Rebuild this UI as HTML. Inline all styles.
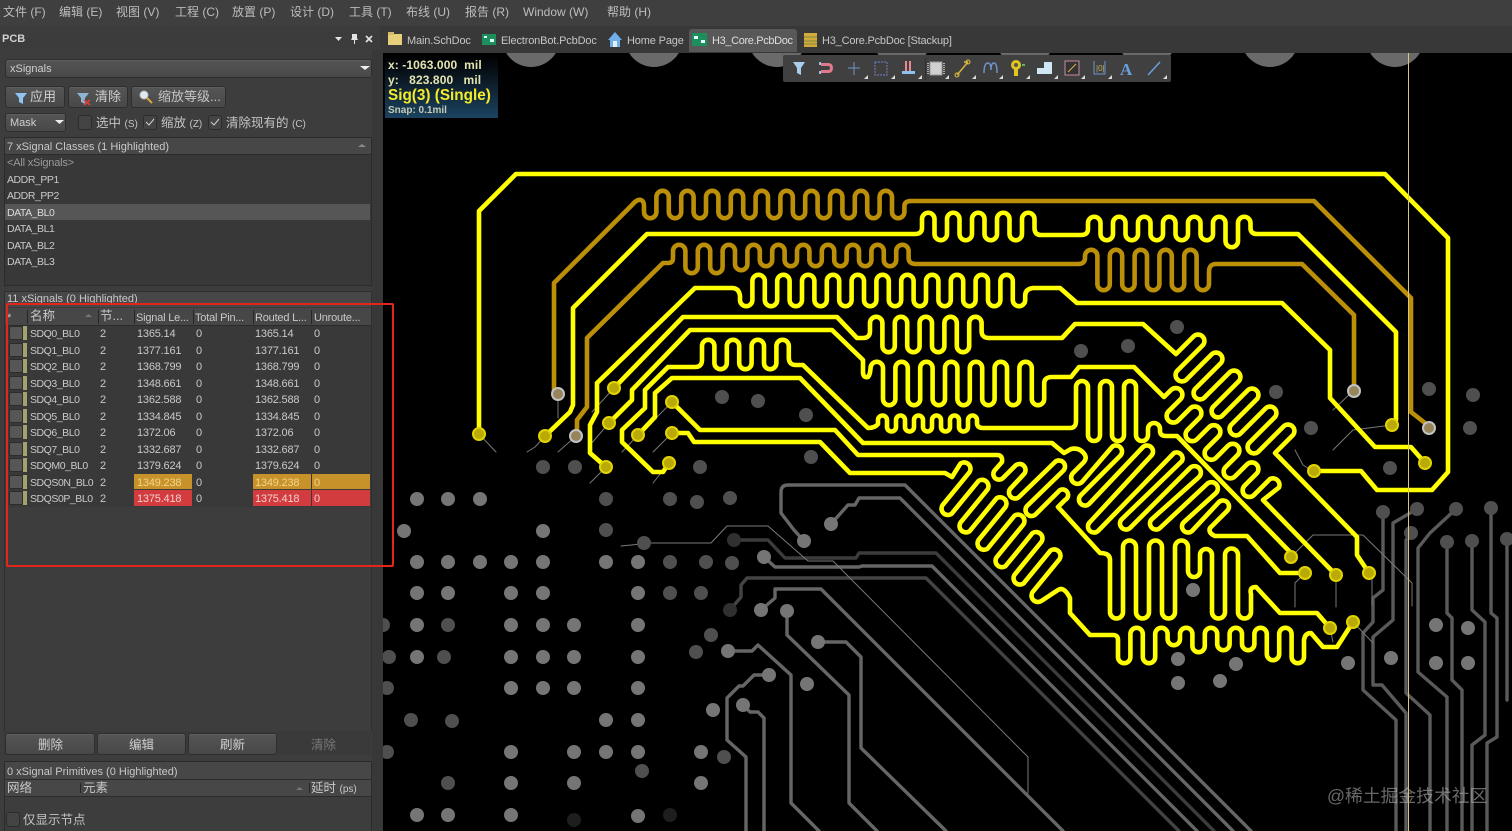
<!DOCTYPE html>
<html><head><meta charset="utf-8"><style>
html,body{margin:0;padding:0;background:#000;}
#r{position:relative;width:1512px;height:831px;overflow:hidden;background:#000;font:11px "Liberation Sans","Noto Sans CJK SC",sans-serif;color:#c9c9c9;filter:blur(.35px);}
.a{position:absolute;}
.t{position:absolute;white-space:nowrap;line-height:14px;height:14px;}
.m{font-size:12px;color:#bdbdbd;top:5px;}
.u{font-size:10.5px;letter-spacing:-.45px;}
.v{letter-spacing:-.2px;}
.tb{letter-spacing:-.15px;color:#c6c6c6;top:34px;}
.b{position:absolute;box-sizing:border-box;background:linear-gradient(#555,#484848);border:1px solid #2e2e2e;border-radius:3px;box-shadow:inset 0 1px 0 #5e5e5e;}
.c{position:absolute;box-sizing:border-box;width:14px;height:15px;background:#444;border:1px solid #2c2c2c;border-radius:3px;}
.s{position:absolute;left:9px;width:14px;height:14px;background:#565656;border:1px solid #2c2c2c;border-radius:2px;box-sizing:border-box;}
.o{position:absolute;left:23px;width:4px;height:14px;background:#a3a36e;}
svg{position:absolute;left:0;top:0;}
.sep{position:absolute;width:1px;background:#262626;}
</style></head><body><div id="r">

<svg width="1512" height="831" viewBox="0 0 1512 831" fill="none" stroke-linejoin="round" stroke-linecap="round">
<!-- top bumps -->
<g fill="#6a6a6a"><circle cx="531" cy="38" r="29"/><circle cx="654" cy="38" r="29"/><circle cx="777" cy="38" r="29"/><circle cx="902" cy="38" r="29"/><circle cx="1025" cy="38" r="29"/><circle cx="1147" cy="38" r="29"/><circle cx="1270" cy="38" r="29"/><circle cx="1395" cy="38" r="29"/></g>

<!-- gray traces -->
<g stroke="#666" stroke-width="3.4">
<path d="M804,541L794,530L781,513V492Q781,485 788,485H905L1251,831"/>
<path d="M831,524L848,505H855L859,498H900L1233,831"/>
<path d="M764,557L775,567H859L862,566H932L1197,831"/>
<path d="M761,610L775,598V589H821L1063,831"/>
<path d="M787,611V635L849,695V803L877,831"/>
<path d="M818,642H846L861,657V748L946,831"/>
<path d="M728,651H752L758,645L791,675V803L819,831"/>
<path d="M769,675H754L743,686H739L727,698V740L746,757V831"/>
<path d="M743,705L750,712H758L764,718V831"/>
</g>
<g stroke="#5a5a5a" stroke-width="3.4">
<path d="M1383,512V590L1373,598V622L1363,633V690L1396,720V831"/>
<path d="M1417,509L1393,523V620L1373,637V685H1382L1406,713V831"/>
<path d="M1411,533L1406,540V693L1430,715V831"/>
<path d="M1456,509L1430,533L1418,548V672L1447,697V831"/>
<path d="M1447,542V613L1452,618V680L1462,690V831"/>
<path d="M1472,541V610L1485,622V735L1472,745V831"/>
<path d="M1491,508V613L1497,618V737L1487,743V831"/>
<path d="M1507,539V700"/>
</g>
<path d="M734,540H768L785,558H856L859,553H936L1214,831" stroke="#3c3c3c" stroke-width="3.4"/>
<path d="M730,610L741,597V585L747,578H926L1179,831" stroke="#444" stroke-width="3.4"/>
<path d="M621,546L651,543H711L727,526H768L808,561H833L1028,757V793" stroke="#7a7a7a" stroke-width="1"/>

<!-- vias -->
<g fill="#757575">
<circle cx="417" cy="499" r="7"/><circle cx="448" cy="499" r="7"/><circle cx="480" cy="499" r="7"/>
<circle cx="404" cy="531" r="7"/><circle cx="543" cy="531" r="7"/>
<circle cx="417" cy="562" r="7"/><circle cx="448" cy="562" r="7"/><circle cx="480" cy="562" r="7"/><circle cx="511" cy="562" r="7"/><circle cx="543" cy="562" r="7"/><circle cx="606" cy="562" r="7"/><circle cx="638" cy="562" r="7"/>
<circle cx="417" cy="593" r="7"/><circle cx="448" cy="593" r="7"/><circle cx="511" cy="593" r="7"/><circle cx="543" cy="593" r="7"/><circle cx="638" cy="593" r="7"/>
<circle cx="417" cy="625" r="7"/><circle cx="511" cy="625" r="7"/><circle cx="543" cy="625" r="7"/><circle cx="574" cy="625" r="7"/><circle cx="638" cy="625" r="7"/>
<circle cx="417" cy="657" r="7"/><circle cx="511" cy="657" r="7"/><circle cx="543" cy="657" r="7"/><circle cx="574" cy="657" r="7"/><circle cx="638" cy="657" r="7"/>
<circle cx="511" cy="688" r="7"/><circle cx="543" cy="688" r="7"/><circle cx="574" cy="688" r="7"/><circle cx="638" cy="688" r="7"/>
<circle cx="606" cy="720" r="7"/><circle cx="638" cy="720" r="7"/>
<circle cx="511" cy="752" r="7"/><circle cx="574" cy="752" r="7"/><circle cx="606" cy="752" r="7"/><circle cx="638" cy="752" r="7"/><circle cx="701" cy="752" r="7"/>
<circle cx="511" cy="783" r="7"/><circle cx="574" cy="783" r="7"/><circle cx="701" cy="783" r="7"/>
<circle cx="417" cy="815" r="7"/><circle cx="448" cy="815" r="7"/><circle cx="511" cy="815" r="7"/><circle cx="638" cy="816" r="7"/>
<circle cx="804" cy="541" r="7"/><circle cx="831" cy="524" r="7"/><circle cx="764" cy="557" r="7"/><circle cx="761" cy="610" r="7"/><circle cx="787" cy="611" r="7"/><circle cx="818" cy="642" r="7"/><circle cx="728" cy="651" r="7"/><circle cx="769" cy="675" r="7"/><circle cx="743" cy="705" r="7"/><circle cx="807" cy="684" r="7"/><circle cx="713" cy="710" r="7"/>
<circle cx="1193" cy="590" r="7"/><circle cx="1178" cy="659" r="7"/><circle cx="1236" cy="664" r="7"/><circle cx="1178" cy="683" r="7"/><circle cx="1220" cy="681" r="7"/><circle cx="1348" cy="663" r="7"/><circle cx="1391" cy="658" r="7"/><circle cx="1436" cy="625" r="7"/><circle cx="1468" cy="628" r="7"/><circle cx="1436" cy="663" r="7"/><circle cx="1468" cy="663" r="7"/>
</g>
<g fill="#4f4f4f">
<circle cx="606" cy="499" r="7"/><circle cx="670" cy="499" r="7"/><circle cx="697" cy="502" r="7"/><circle cx="730" cy="498" r="7"/><circle cx="606" cy="530" r="7"/><circle cx="670" cy="562" r="7"/><circle cx="706" cy="562" r="7"/><circle cx="732" cy="563" r="7"/><circle cx="670" cy="593" r="7"/><circle cx="701" cy="593" r="7"/><circle cx="383" cy="625" r="7"/><circle cx="448" cy="625" r="7"/><circle cx="389" cy="657" r="7"/><circle cx="444" cy="657" r="7"/><circle cx="387" cy="688" r="7"/><circle cx="411" cy="720" r="7"/><circle cx="452" cy="721" r="7"/><circle cx="387" cy="752" r="7"/><circle cx="724" cy="757" r="7"/><circle cx="642" cy="771" r="7"/><circle cx="448" cy="783" r="7"/><circle cx="644" cy="543" r="7"/><circle cx="711" cy="635" r="7"/><circle cx="696" cy="652" r="7"/>
<circle cx="722" cy="397" r="7"/><circle cx="758" cy="401" r="7"/><circle cx="806" cy="415" r="7"/><circle cx="811" cy="457" r="7"/><circle cx="543" cy="467" r="7"/><circle cx="575" cy="467" r="7"/><circle cx="700" cy="467" r="7"/><circle cx="1177" cy="327" r="7"/><circle cx="1081" cy="351" r="7"/><circle cx="1128" cy="346" r="7"/><circle cx="1276" cy="392" r="7"/><circle cx="1311" cy="428" r="7"/><circle cx="1390" cy="468" r="7"/><circle cx="1429" cy="389" r="7"/><circle cx="1473" cy="395" r="7"/><circle cx="1470" cy="428" r="7"/>
<circle cx="1383" cy="512" r="7"/><circle cx="1417" cy="509" r="7"/><circle cx="1411" cy="533" r="7"/><circle cx="1456" cy="509" r="7"/><circle cx="1447" cy="542" r="7"/><circle cx="1472" cy="541" r="7"/><circle cx="1491" cy="508" r="7"/><circle cx="1507" cy="539" r="7"/>
</g>
<g fill="#303030"><circle cx="734" cy="540" r="7"/><circle cx="730" cy="610" r="7"/><circle cx="574" cy="820" r="7" fill="#1e1e1e"/><circle cx="670" cy="815" r="7" fill="#1e1e1e"/></g>

<!-- thin nets near pads -->
<g stroke="#777" stroke-width="1">
<path d="M479,434L496,452M545,436L535,447L527,452M576,436L558,452M606,467L590,483M614,388L592,412M609,423L590,445M638,435L622,452M669,463L653,483M672,402L654,420M672,433L653,452M558,394V418"/>
<path d="M1314,472L1303,465L1295,450M1291,557L1313,535H1363L1412,583V606M1369,573L1372,580V605M1305,573L1295,583V607M1336,575V607M1353,391L1333,410M1392,425L1353,430L1333,450M1353,622L1373,643M1330,628L1333,642"/>
</g>

<!-- gold traces -->
<g stroke="#bc8f08" stroke-width="4.6">
<path d="M554,394V283L632,205Q637,199 641,200Q644,201 644,206V212a6.2 6.2 0 0 0 12.4 0V197a6.2 6.2 0 0 1 12.4 0V212a6.2 6.2 0 0 0 12.4 0V197a6.2 6.2 0 0 1 12.4 0V212a6.2 6.2 0 0 0 12.4 0V197a6.2 6.2 0 0 1 12.4 0V212a6.2 6.2 0 0 0 12.4 0V197a6.2 6.2 0 0 1 12.4 0V212a6.2 6.2 0 0 0 12.4 0V197a6.2 6.2 0 0 1 12.4 0V212a6.2 6.2 0 0 0 12.4 0V197a6.2 6.2 0 0 1 12.4 0V212a6.2 6.2 0 0 0 12.4 0V197a6.2 6.2 0 0 1 12.4 0V212a6.2 6.2 0 0 0 12.4 0V197a6.2 6.2 0 0 1 12.4 0V212a6.2 6.2 0 0 0 12.4 0V197a6.2 6.2 0 0 1 12.4 0V212a6.2 6.2 0 0 0 12.4 0V197a6.2 6.2 0 0 1 12.4 0V212a6.2 6.2 0 0 0 12.4 0V207Q904,201 911,201H1314L1411,298V412L1425,423L1429,428"/>
<path d="M577,436V420L587,407V338L663,263H668Q673,263 673,258V251a6.2 6.2 0 0 1 12.4 0V267a6.2 6.2 0 0 0 12.4 0V251a6.2 6.2 0 0 1 12.4 0V267a6.2 6.2 0 0 0 12.4 0V251a6.2 6.2 0 0 1 12.4 0V264a6.2 6.2 0 0 0 12.4 0V251a6.2 6.2 0 0 1 12.4 0V260a6.2 6.2 0 0 0 12.4 0V251a6.2 6.2 0 0 1 12.4 0V260a6.2 6.2 0 0 0 12.4 0V251a6.2 6.2 0 0 1 12.4 0V260a6.2 6.2 0 0 0 12.4 0V251a6.2 6.2 0 0 1 12.4 0V260a6.2 6.2 0 0 0 12.4 0V251a6.2 6.2 0 0 1 12.4 0V260a6.2 6.2 0 0 0 12.4 0V251a6.2 6.2 0 0 1 12.4 0V260a6.2 6.2 0 0 0 12.4 0V251a6.2 6.2 0 0 1 12.4 0V258Q908.6,264 916,264H1078Q1085,264 1085,258V256a6.2 6.2 0 0 1 12.4 0V284a6.2 6.2 0 0 0 12.4 0V256a6.2 6.2 0 0 1 12.4 0V284a6.2 6.2 0 0 0 12.4 0V256a6.2 6.2 0 0 1 12.4 0V284a6.2 6.2 0 0 0 12.4 0V256a6.2 6.2 0 0 1 12.4 0V284a6.2 6.2 0 0 0 12.4 0V256a6.2 6.2 0 0 1 12.4 0V284a6.2 6.2 0 0 0 12.4 0V272Q1209,264 1216,264H1302L1354,315V391"/>
</g>

<!-- yellow traces -->
<g stroke="#ffff00" stroke-width="4.6">
<path d="M1314,471H1361L1377,490H1432L1448,472V238L1385,174H516L479,211V434"/>
<path d="M545,436L570,412L573,405V308L647,234H915Q922,234 922,228V219a6.25 6.25 0 0 1 12.5 0V234a6.25 6.25 0 0 0 12.5 0V219a6.25 6.25 0 0 1 12.5 0V234a6.25 6.25 0 0 0 12.5 0V219a6.25 6.25 0 0 1 12.5 0V234a6.25 6.25 0 0 0 12.5 0V219a6.25 6.25 0 0 1 12.5 0V234a6.25 6.25 0 0 0 12.5 0V219a6.25 6.25 0 0 1 12.5 0V228Q1034.5,235 1041,235H1081Q1088,235 1088,229V223a6.25 6.25 0 0 1 12.5 0V234a6.25 6.25 0 0 0 12.5 0V223a6.25 6.25 0 0 1 12.5 0V234a6.25 6.25 0 0 0 12.5 0V223a6.25 6.25 0 0 1 12.5 0V234a6.25 6.25 0 0 0 12.5 0V223a6.25 6.25 0 0 1 12.5 0V234a6.25 6.25 0 0 0 12.5 0V223a6.25 6.25 0 0 1 12.5 0V234a6.25 6.25 0 0 0 12.5 0V223a6.25 6.25 0 0 1 12.5 0V241a6.25 6.25 0 0 0 12.5 0V223a6.25 6.25 0 0 1 12.5 0V228Q1250.5,234 1257,234H1298L1396,332V420L1392,425"/>
<path d="M606,467L590,453V425L597,412V383L695,288H732Q739,288 740,296V300a6.2 6.2 0 0 0 12.4 0V281a6.2 6.2 0 0 1 12.4 0V300a6.2 6.2 0 0 0 12.4 0V281a6.2 6.2 0 0 1 12.4 0V300a6.2 6.2 0 0 0 12.4 0V281a6.2 6.2 0 0 1 12.4 0V300a6.2 6.2 0 0 0 12.4 0V281a6.2 6.2 0 0 1 12.4 0V300a6.2 6.2 0 0 0 12.4 0V281a6.2 6.2 0 0 1 12.4 0V300a6.2 6.2 0 0 0 12.4 0V281a6.2 6.2 0 0 1 12.4 0V300a6.2 6.2 0 0 0 12.4 0V281a6.2 6.2 0 0 1 12.4 0V300a6.2 6.2 0 0 0 12.4 0V281a6.2 6.2 0 0 1 12.4 0V300a6.2 6.2 0 0 0 12.4 0V281a6.2 6.2 0 0 1 12.4 0V300a6.2 6.2 0 0 0 12.4 0V281a6.2 6.2 0 0 1 12.4 0V300a6.2 6.2 0 0 0 12.4 0V281a6.2 6.2 0 0 1 12.4 0V300a6.2 6.2 0 0 0 12.4 0V296Q1025,289 1033,288H1060L1077,303H1282L1330,350V398L1375,447H1411L1425,463"/>
<path d="M614,388L683,317H837L857,338H863Q870,338 870,331V323a6.2 6.2 0 0 1 12.4 0V346a6.2 6.2 0 0 0 12.4 0V323a6.2 6.2 0 0 1 12.4 0V346a6.2 6.2 0 0 0 12.4 0V323a6.2 6.2 0 0 1 12.4 0V346a6.2 6.2 0 0 0 12.4 0V323a6.2 6.2 0 0 1 12.4 0V346a6.2 6.2 0 0 0 12.4 0V323a6.2 6.2 0 0 1 12.4 0V331Q981.6,338 989,338H1062L1075,324H1143L1176,354l18-18a6.4 6.4 0 0 1 9 9l-26 26a6.4 6.4 0 0 0 9 9l26-26a6.4 6.4 0 0 1 9 9l-26 26a6.4 6.4 0 0 0 9 9l26-26a6.4 6.4 0 0 1 9 9l-26 26a6.4 6.4 0 0 0 9 9l26-26a6.4 6.4 0 0 1 9 9l-26 26a6.4 6.4 0 0 0 9 9l26-26a6.4 6.4 0 0 1 9 9l-26 26a6.4 6.4 0 0 0 9 9l26-26a6.4 6.4 0 0 1 9 9L1275,453L1357,537V555L1369,573"/>
<path d="M609,423L632,400V390L690,330H832L863,360V372Q863,378 868,377Q870,375 870.6,368a6.2 6.2 0 0 1 12.4 0V399a6.2 6.2 0 0 0 12.4 0V368a6.2 6.2 0 0 1 12.4 0V399a6.2 6.2 0 0 0 12.4 0V368a6.2 6.2 0 0 1 12.4 0V399a6.2 6.2 0 0 0 12.4 0V368a6.2 6.2 0 0 1 12.4 0V399a6.2 6.2 0 0 0 12.4 0V368a6.2 6.2 0 0 1 12.4 0V399a6.2 6.2 0 0 0 12.4 0V368a6.2 6.2 0 0 1 12.4 0V399a6.2 6.2 0 0 0 12.4 0V368a6.2 6.2 0 0 1 12.4 0V399a6.2 6.2 0 0 0 12.4 0V384Q1044,377 1052,377H1071L1079,367H1134L1164,397l7-7a6.6 6.6 0 0 1 9.5 9.3l-12 12a6.6 6.6 0 0 0 9.5 9.3l12-12a6.6 6.6 0 0 1 9.5 9.3l-12 12a6.6 6.6 0 0 0 9.5 9.3l12-12a6.6 6.6 0 0 1 9.5 9.3l-12 12a6.6 6.6 0 0 0 9.5 9.3l12-12a6.6 6.6 0 0 1 9.5 9.3l-12 12a6.6 6.6 0 0 0 9.5 9.3l12-12a6.6 6.6 0 0 1 9.5 9.3l-12 12a6.6 6.6 0 0 0 9.5 9.3l16-16a6.6 6.6 0 0 1 9 8.4L1263,500L1336,575"/>
<path d="M669,463L663,472H653L622,442V430L645,408V390L668,367H695Q702,367 702,360V346a6.2 6.2 0 0 1 12.4 0V363a6.2 6.2 0 0 0 12.4 0V346a6.2 6.2 0 0 1 12.4 0V363a6.2 6.2 0 0 0 12.4 0V346a6.2 6.2 0 0 1 12.4 0V363a6.2 6.2 0 0 0 12.4 0V346a6.2 6.2 0 0 1 12.4 0V358Q789,365 796,365H803L868,428Q875,428 878,424V420a4.5 4.5 0 0 1 9 0V427a4.5 4.5 0 0 0 9 0V420a4.5 4.5 0 0 1 9 0V427a4.5 4.5 0 0 0 9 0V420a4.5 4.5 0 0 1 9 0V427a4.5 4.5 0 0 0 9 0V420a4.5 4.5 0 0 1 9 0V427a4.5 4.5 0 0 0 9 0V420a4.5 4.5 0 0 1 9 0V427a4.5 4.5 0 0 0 9 0V420a4.5 4.5 0 0 1 9 0V423Q977,428 983,428H1070Q1076,428 1076,421V387a6 6 0 0 1 12 0V435a6 6 0 0 0 12 0V387a6 6 0 0 1 12 0V435a6 6 0 0 0 12 0V387a6 6 0 0 1 12 0V435a6 6 0 0 0 12 0V429a6 6 0 0 1 12 0V431Q1160,436 1166,436H1177L1290,552L1291,557"/>
<path d="M638,435L655,417V393L672,378H800L863,443H1052L1064,453L1071,449Q1080,447 1085,455Q1087,459 1083,463L1073,473A6 6 0 0 0 1082,482L1112,447A6 6 0 0 1 1120,456L1081,495A6 6 0 0 0 1089,504L1143,447A6 6 0 0 1 1151,456L1090,522A6 6 0 0 0 1098,531L1174,453A6 6 0 0 1 1182,461L1122,519A6 6 0 0 0 1130,528L1190,468A6 6 0 0 1 1199,477L1152,519A6 6 0 0 0 1160,528L1207,484A6 6 0 0 1 1216,493L1184,522A6 6 0 0 0 1192,531L1219,502A6 6 0 0 1 1227,511L1210,528Q1208,533 1215,536H1247L1280,573H1305"/>
<path d="M672,433H688L694,442H820L850,473H945L952,477L960.500,463.500a6.400 6.400 0 0 1 9 8.700l-27 33a6.400 6.400 0 0 0 9 8.700l27-33a6.400 6.400 0 0 1 9 8.700l-27 33a6.400 6.400 0 0 0 9 8.700l27-33a6.400 6.400 0 0 1 9 8.700l-27 33a6.400 6.400 0 0 0 9 8.700l27-33a6.400 6.400 0 0 1 9 8.700l-27 33a6.400 6.400 0 0 0 9 8.700l27-33a6.400 6.400 0 0 1 9 8.700l-27 33a6.400 6.400 0 0 0 9 8.700l27-33a6.400 6.400 0 0 1 9 8.700l-27 33a6.400 6.400 0 0 0 9 8.700L1058,590Q1064,586 1070,598V613L1090,635H1113Q1118,635 1118,640V657a6.2 6.2 0 0 0 12.4 0V634a6.2 6.2 0 0 1 12.4 0V657a6.2 6.2 0 0 0 12.4 0V634a6.2 6.2 0 0 1 12.4 0V639a6.2 6.2 0 0 0 12.4 0V634a6.2 6.2 0 0 1 12.4 0V646a6.2 6.2 0 0 0 12.4 0V634a6.2 6.2 0 0 1 12.4 0V644a6.2 6.2 0 0 0 12.4 0V634a6.2 6.2 0 0 1 12.4 0V644a6.2 6.2 0 0 0 12.4 0V634a6.2 6.2 0 0 1 12.4 0V654a6.2 6.2 0 0 0 12.4 0V634a6.2 6.2 0 0 1 12.4 0V657a6.2 6.2 0 0 0 12.4 0V640Q1305,633 1311,633L1323,647H1337L1353,622"/>
<path d="M672,402L700,430H835L858,455H997Q1003,455 1002,462L995,470A5 5 0 0 0 1003,478L1015,466A5 5 0 0 1 1024,474L1011,488A5 5 0 0 0 1019,497L1055,462A5.5 5.5 0 0 1 1063,471L1027,506A5.5 5.5 0 0 0 1036,514L1060,490A5 5 0 0 1 1065,500L1058,507L1100,553Q1110,553 1110,560V612a6.5 6.5 0 0 0 13 0V547a6.5 6.5 0 0 1 13 0V612a6.5 6.5 0 0 0 13 0V547a6.5 6.5 0 0 1 13 0V612a6.5 6.5 0 0 0 13 0V547a6.5 6.5 0 0 1 13 0V571a6 6 0 0 0 12 0V555a6 6 0 0 1 12 0V612a6.5 6.5 0 0 0 13 0V555a6.5 6.5 0 0 1 13 0V612a6.5 6.5 0 0 0 13 0V594Q1249,587 1256,587L1280,613H1317L1330,628"/>
</g>

<!-- pads -->
<g stroke="#e2d400" stroke-width="2" fill="#b9aa08">
<circle cx="479" cy="434" r="6"/><circle cx="545" cy="436" r="6"/><circle cx="606" cy="467" r="6"/><circle cx="609" cy="423" r="6"/><circle cx="614" cy="388" r="6"/><circle cx="638" cy="435" r="6"/><circle cx="669" cy="463" r="6"/><circle cx="672" cy="402" r="6"/><circle cx="672" cy="433" r="6"/><circle cx="1392" cy="425" r="6"/><circle cx="1425" cy="463" r="6"/><circle cx="1314" cy="471" r="6"/><circle cx="1291" cy="557" r="6"/><circle cx="1305" cy="573" r="6"/><circle cx="1336" cy="575" r="6"/><circle cx="1369" cy="573" r="6"/><circle cx="1330" cy="628" r="6"/><circle cx="1353" cy="622" r="6"/>
</g>
<g stroke="#c2c2c2" stroke-width="2" fill="#96855a"><circle cx="558" cy="394" r="6"/><circle cx="576" cy="436" r="6"/><circle cx="1354" cy="391" r="6"/><circle cx="1429" cy="428" r="6"/></g>

<path d="M1408.5,53V831" stroke="#d9c878" stroke-width="1" stroke-linecap="butt"/>
</svg>

<!-- menu -->
<div class="a" style="left:0;top:0;width:1512px;height:26px;background:#3f3f3f"></div>
<div class="t m" style="left:3px">文件 (F)</div><div class="t m" style="left:59px">编辑 (E)</div><div class="t m" style="left:116px">视图 (V)</div><div class="t m" style="left:175px">工程 (C)</div><div class="t m" style="left:232px">放置 (P)</div><div class="t m" style="left:290px">设计 (D)</div><div class="t m" style="left:349px">工具 (T)</div><div class="t m" style="left:406px">布线 (U)</div><div class="t m" style="left:465px">报告 (R)</div><div class="t m" style="left:523px">Window (W)</div><div class="t m" style="left:607px">帮助 (H)</div>

<!-- tabs -->
<div class="a" style="left:383px;top:26px;width:1129px;height:27px;background:#383838"></div>
<div class="a" style="left:689px;top:29px;width:108px;height:23px;background:#585858;border-radius:3px 3px 0 0"></div>
<svg width="1512" height="60" style="height:60px">
<rect x="388" y="34" width="14" height="11" fill="#e6cf7a"/><rect x="388" y="32" width="6" height="3" fill="#d6bc66"/>
<g fill="#1d8f5c"><rect x="482" y="34" width="14" height="11"/><rect x="692" y="33" width="15" height="13"/></g>
<g fill="#dff"><rect x="484" y="36" width="3" height="2"/><rect x="490" y="39" width="4" height="3"/><rect x="694" y="36" width="4" height="3"/><rect x="701" y="40" width="4" height="3"/></g>
<path d="M615,32L608,40H610V47H620V40H622Z" fill="#6fb0ea"/><rect x="613" y="41" width="4" height="6" fill="#e8eef5"/>
<rect x="804" y="33" width="13" height="14" fill="#d2a93a"/><path d="M804,37H817M804,41H817M804,44H817" stroke="#7d8a40" stroke-width="1"/>
</svg>
<div class="t tb" style="left:407px">Main.SchDoc</div>
<div class="t tb" style="left:501px">ElectronBot.PcbDoc</div>
<div class="t tb" style="left:627px">Home Page</div>
<div class="t tb" style="left:712px;letter-spacing:-.35px;color:#dedede">H3_Core.PcbDoc</div>
<div class="t tb" style="left:822px;letter-spacing:-.2px">H3_Core.PcbDoc [Stackup]</div>

<!-- info -->
<div class="a" style="left:385px;top:55px;width:113px;height:63px;background:linear-gradient(#000 0%,#0c1a26 40%,#1b4361 100%)"></div>
<div class="t" style="left:388px;top:58px;font-size:12px;font-weight:bold;color:#e4e4b0;white-space:pre;letter-spacing:.1px">x: -1063.000  mil</div>
<div class="t" style="left:388px;top:73px;font-size:12px;font-weight:bold;color:#e4e4b0;white-space:pre;letter-spacing:.1px">y:   823.800   mil</div>
<div class="t" style="left:388px;top:89px;font-size:15.3px;font-weight:bold;color:#f5ec28">Sig(3) (Single)</div>
<div class="t" style="left:388px;top:104px;font-size:10px;font-weight:bold;color:#c4ccb4">Snap: 0.1mil</div>

<!-- toolbar -->
<div class="a" style="left:783px;top:55px;width:388px;height:27px;background:#404040;border-radius:2px"></div>
<svg width="1512" height="90" style="height:90px" fill="none">
<path d="M793,62H805L801,68V75L797,73V68Z" fill="#a9cdea"/>
<path d="M821,63H828Q833,63 833,68Q833,73 828,73H821V70H828Q830,70 830,68Q830,66 828,66H821Z" fill="#e07a8a"/><path d="M820,62V65M820,71V74" stroke="#8fc0ee" stroke-width="2"/>
<path d="M854,62V75M848,68H860" stroke="#6f93c9"/>
<rect x="875" y="62" width="12" height="13" stroke="#6f7fcf" stroke-dasharray="2 1"/>
<rect x="905" y="61" width="2" height="10" fill="#e88a90"/><rect x="909" y="61" width="2" height="10" fill="#e88a90"/><path d="M902,71H915V74H902Z" fill="#8fc0ee"/>
<path d="M925.5,58V80" stroke="#2e2e2e"/>
<rect x="930" y="62" width="12" height="13" fill="#d0d0d0" stroke="#999"/><path d="M928,63V75M944,63V75" stroke="#b0b0b0" stroke-width="2" stroke-dasharray="1 1"/>
<path d="M957,75L968,62M968,62H964" stroke="#d8b040" stroke-width="1.5"/><circle cx="957" cy="75" r="2" stroke="#e0c040"/><circle cx="968" cy="62" r="2" stroke="#e0c040"/>
<path d="M984,73Q984,63 988,63Q991,63 991,70Q991,63 994,63Q997,63 997,73" stroke="#6f93c9" stroke-width="1.5"/>
<circle cx="1016" cy="65" r="5" fill="#e4c520"/><rect x="1014" y="69" width="4" height="7" fill="#e4c520"/><circle cx="1016" cy="65" r="2" fill="#555"/><path d="M1022,65H1025" stroke="#5cb85c" stroke-width="2"/>
<path d="M1037,74V68H1044V62H1052V74Z" fill="#cfe6f5"/>
<rect x="1065" y="61" width="14" height="14" fill="#333" stroke="#c78aa4"/><path d="M1068,72L1076,64" stroke="#e0b050"/>
<path d="M1094,61V74H1105V61" stroke="#6f93c9"/><text x="1096" y="71" font-size="8" fill="#b8b070" font-family="Liberation Sans">|0|</text>
<text x="1120" y="75" font-size="17" font-weight="bold" fill="#6aa0dc" font-family="Liberation Serif">A</text>
<path d="M1148,75L1160,62" stroke="#6aa0dc" stroke-width="1.5"/>
<g fill="#dcdcdc"><path d="M868,79V75L864,79ZM895,79V75L891,79ZM922,79V75L918,79ZM949,79V75L945,79ZM976,79V75L972,79ZM1003,79V75L999,79ZM1030,79V75L1026,79ZM1058,79V75L1054,79ZM1085,79V75L1081,79ZM1112,79V75L1108,79ZM1167,79V75L1163,79Z"/></g>
</svg>

<!-- left panel -->
<div class="a" style="left:0;top:26px;width:383px;height:805px;background:#3d3d3d"></div>
<div class="a" style="left:372px;top:26px;width:11px;height:805px;background:#383838"></div>
<div class="a" style="left:0;top:26px;width:380px;height:24px;background:#3c3c3c"></div>
<div class="t" style="left:2px;top:32px;font-size:11px;color:#d0d0d0;font-weight:bold">PCB</div>
<svg width="383" height="50" style="height:50px" fill="#e4e4e4"><path d="M335,37H342L338.500,41Z"/><path d="M352,34H357V38L358,40H355V44H354V40H351L352,38Z"/><path d="M366,36L372,42M372,36L366,42" stroke="#e4e4e4" stroke-width="1.600"/></svg>

<div class="b" style="left:5px;top:59px;width:367px;height:19px"></div>
<div class="t" style="left:10px;top:62px;color:#cfcfcf">xSignals</div>
<svg width="383" height="80" style="height:80px"><path d="M360,66H370L365,70Z" fill="#eee"/></svg>

<div class="b" style="left:5px;top:86px;width:60px;height:22px"></div>
<div class="b" style="left:68px;top:86px;width:60px;height:22px"></div>
<div class="b" style="left:131px;top:86px;width:95px;height:22px"></div>
<svg width="383" height="110" style="height:110px">
<path d="M15,93H27L23,98V104L19,102V98Z" fill="#8fc4f0"/>
<path d="M77,93H89L85,98V104L81,102V98Z" fill="#8fb4d0"/><path d="M84,100L90,105M90,100L84,105" stroke="#e0403a" stroke-width="1.500"/>
<circle cx="144" cy="95" r="4" fill="#dfe9f2" stroke="#bbb"/><path d="M147,98L152,103" stroke="#d9a441" stroke-width="2"/>
</svg>
<div class="t" style="left:30px;top:90px;font-size:13px;color:#d0d0d0">应用</div>
<div class="t" style="left:95px;top:90px;font-size:13px;color:#d0d0d0">清除</div>
<div class="t" style="left:158px;top:90px;font-size:13px;color:#c4c4c4">缩放等级...</div>

<div class="b" style="left:5px;top:113px;width:61px;height:19px"></div>
<div class="t" style="left:10px;top:116px;color:#cfcfcf">Mask</div>
<div class="c" style="left:78px;top:115px"></div><div class="c" style="left:143px;top:115px"></div><div class="c" style="left:208px;top:115px"></div>
<svg width="383" height="132" style="height:132px" fill="none"><path d="M55,120H64L59.500,124Z" fill="#eee"/><path d="M146,122L149,125L154,119M211,122L214,125L219,119" stroke="#cfcfcf"/></svg>
<div class="t" style="left:96px;top:116px;font-size:12.500px;color:#c4c4c4">选中 <span style="font-size:10px">(S)</span></div>
<div class="t" style="left:161px;top:116px;font-size:12.500px;color:#c4c4c4">缩放 <span style="font-size:10px">(Z)</span></div>
<div class="t" style="left:226px;top:116px;font-size:12.500px;color:#c4c4c4">清除现有的 <span style="font-size:10px">(C)</span></div>

<!-- classes list -->
<div class="a" style="left:4px;top:137px;width:366px;height:147px;border:1px solid #2b2b2b;background:#383838"></div>
<div class="a" style="left:5px;top:138px;width:366px;height:16px;background:#474747;border-bottom:1px solid #2b2b2b"></div>
<div class="t" style="left:7px;top:140px;color:#c8c8c8">7 xSignal Classes (1 Highlighted)</div>
<svg width="383" height="150" style="height:150px"><path d="M358,147H366L362,144Z" fill="#8a8a8a"/></svg>
<div class="a" style="left:5px;top:204px;width:365px;height:16px;background:#565656"></div>
<div class="t v" style="left:7px;top:156px;color:#9a9a9a">&lt;All xSignals&gt;</div>
<div class="t u" style="left:7px;top:173px">ADDR_PP1</div><div class="t u" style="left:7px;top:189px">ADDR_PP2</div><div class="t u" style="left:7px;top:206px;color:#dcdcdc">DATA_BL0</div><div class="t u" style="left:7px;top:222px">DATA_BL1</div><div class="t u" style="left:7px;top:239px">DATA_BL2</div><div class="t u" style="left:7px;top:255px">DATA_BL3</div>

<!-- signals table -->
<div class="a" style="left:4px;top:291px;width:366px;height:440px;border:1px solid #2f2f2f;border-bottom:none;background:#3d3d3d"></div>
<div class="a" style="left:5px;top:292px;width:366px;height:15px;background:#474747"></div>
<div class="t" style="left:7px;top:292px;color:#c8c8c8">11 xSignals (0 Highlighted)</div>
<div class="a" style="left:5px;top:308px;width:366px;height:17px;background:#474747;border-bottom:1px solid #2b2b2b"></div>
<div class="a" style="left:5px;top:326px;width:366px;height:181px;background:#393939"></div>
<div class="sep" style="left:27px;top:310px;height:14px"></div><div class="sep" style="left:98px;top:310px;height:14px"></div><div class="sep" style="left:134px;top:310px;height:14px"></div><div class="sep" style="left:193px;top:310px;height:14px"></div><div class="sep" style="left:253px;top:310px;height:14px"></div><div class="sep" style="left:311px;top:310px;height:14px"></div>
<div class="t" style="left:7px;top:311px">*</div><div class="t" style="left:30px;top:309px;font-size:12.500px">名称</div><div class="t" style="left:100px;top:309px;font-size:12.500px">节...</div><div class="t v" style="left:136px;top:311px">Signal Le...</div><div class="t v" style="left:195px;top:311px">Total Pin...</div><div class="t v" style="left:255px;top:311px">Routed L...</div><div class="t v" style="left:314px;top:311px">Unroute...</div>
<svg width="383" height="320" style="height:320px"><path d="M85,317H92L88.500,314Z" fill="#777"/></svg>

<div class="a" style="left:134px;top:474px;width:58px;height:15px;background:#c8922a"></div><div class="a" style="left:253px;top:474px;width:58px;height:15px;background:#c8922a"></div><div class="a" style="left:312px;top:474px;width:58px;height:15px;background:#c8922a"></div>
<div class="a" style="left:134px;top:490px;width:58px;height:16px;background:#d23c3e"></div><div class="a" style="left:253px;top:490px;width:58px;height:16px;background:#d23c3e"></div><div class="a" style="left:312px;top:490px;width:58px;height:16px;background:#d23c3e"></div>

<div class="s" style="top:326px"></div><div class="o" style="top:326px"></div>
<div class="s" style="top:343px"></div><div class="o" style="top:343px"></div>
<div class="s" style="top:359px"></div><div class="o" style="top:359px"></div>
<div class="s" style="top:376px"></div><div class="o" style="top:376px"></div>
<div class="s" style="top:392px"></div><div class="o" style="top:392px"></div>
<div class="s" style="top:409px"></div><div class="o" style="top:409px"></div>
<div class="s" style="top:425px"></div><div class="o" style="top:425px"></div>
<div class="s" style="top:442px"></div><div class="o" style="top:442px"></div>
<div class="s" style="top:458px"></div><div class="o" style="top:458px"></div>
<div class="s" style="top:475px"></div><div class="o" style="top:475px"></div>
<div class="s" style="top:491px"></div><div class="o" style="top:491px"></div>

<div class="t u" style="left:30px;top:327px">SDQ0_BL0</div><div class="t" style="left:100px;top:327px">2</div><div class="t v" style="left:137px;top:327px">1365.14</div><div class="t" style="left:196px;top:327px">0</div><div class="t v" style="left:255px;top:327px">1365.14</div><div class="t" style="left:314px;top:327px">0</div>
<div class="t u" style="left:30px;top:344px">SDQ1_BL0</div><div class="t" style="left:100px;top:344px">2</div><div class="t v" style="left:137px;top:344px">1377.161</div><div class="t" style="left:196px;top:344px">0</div><div class="t v" style="left:255px;top:344px">1377.161</div><div class="t" style="left:314px;top:344px">0</div>
<div class="t u" style="left:30px;top:360px">SDQ2_BL0</div><div class="t" style="left:100px;top:360px">2</div><div class="t v" style="left:137px;top:360px">1368.799</div><div class="t" style="left:196px;top:360px">0</div><div class="t v" style="left:255px;top:360px">1368.799</div><div class="t" style="left:314px;top:360px">0</div>
<div class="t u" style="left:30px;top:377px">SDQ3_BL0</div><div class="t" style="left:100px;top:377px">2</div><div class="t v" style="left:137px;top:377px">1348.661</div><div class="t" style="left:196px;top:377px">0</div><div class="t v" style="left:255px;top:377px">1348.661</div><div class="t" style="left:314px;top:377px">0</div>
<div class="t u" style="left:30px;top:393px">SDQ4_BL0</div><div class="t" style="left:100px;top:393px">2</div><div class="t v" style="left:137px;top:393px">1362.588</div><div class="t" style="left:196px;top:393px">0</div><div class="t v" style="left:255px;top:393px">1362.588</div><div class="t" style="left:314px;top:393px">0</div>
<div class="t u" style="left:30px;top:410px">SDQ5_BL0</div><div class="t" style="left:100px;top:410px">2</div><div class="t v" style="left:137px;top:410px">1334.845</div><div class="t" style="left:196px;top:410px">0</div><div class="t v" style="left:255px;top:410px">1334.845</div><div class="t" style="left:314px;top:410px">0</div>
<div class="t u" style="left:30px;top:426px">SDQ6_BL0</div><div class="t" style="left:100px;top:426px">2</div><div class="t v" style="left:137px;top:426px">1372.06</div><div class="t" style="left:196px;top:426px">0</div><div class="t v" style="left:255px;top:426px">1372.06</div><div class="t" style="left:314px;top:426px">0</div>
<div class="t u" style="left:30px;top:443px">SDQ7_BL0</div><div class="t" style="left:100px;top:443px">2</div><div class="t v" style="left:137px;top:443px">1332.687</div><div class="t" style="left:196px;top:443px">0</div><div class="t v" style="left:255px;top:443px">1332.687</div><div class="t" style="left:314px;top:443px">0</div>
<div class="t u" style="left:30px;top:459px">SDQM0_BL0</div><div class="t" style="left:100px;top:459px">2</div><div class="t v" style="left:137px;top:459px">1379.624</div><div class="t" style="left:196px;top:459px">0</div><div class="t v" style="left:255px;top:459px">1379.624</div><div class="t" style="left:314px;top:459px">0</div>
<div class="t u" style="left:30px;top:476px">SDQS0N_BL0</div><div class="t" style="left:100px;top:476px">2</div><div class="t v" style="left:137px;top:476px;color:#f2d68a">1349.238</div><div class="t" style="left:196px;top:476px">0</div><div class="t v" style="left:255px;top:476px;color:#f2d68a">1349.238</div><div class="t" style="left:314px;top:476px;color:#f2d68a">0</div>
<div class="t u" style="left:30px;top:492px">SDQS0P_BL0</div><div class="t" style="left:100px;top:492px">2</div><div class="t v" style="left:137px;top:492px;color:#f5d0d0">1375.418</div><div class="t" style="left:196px;top:492px">0</div><div class="t v" style="left:255px;top:492px;color:#f5d0d0">1375.418</div><div class="t" style="left:314px;top:492px;color:#f5d0d0">0</div>

<!-- bottom buttons -->
<div class="a" style="left:4px;top:731px;width:367px;height:24px;background:#3a3a3a"></div>
<div class="b" style="left:5px;top:733px;width:90px;height:22px"></div><div class="b" style="left:97px;top:733px;width:89px;height:22px"></div><div class="b" style="left:188px;top:733px;width:89px;height:22px"></div>
<div class="t" style="left:38px;top:738px;font-size:12.500px;color:#d0d0d0">删除</div><div class="t" style="left:129px;top:738px;font-size:12.500px;color:#d0d0d0">编辑</div><div class="t" style="left:220px;top:738px;font-size:12.500px;color:#d0d0d0">刷新</div><div class="t" style="left:311px;top:738px;font-size:12.500px;color:#777">清除</div>

<div class="a" style="left:4px;top:761px;width:366px;height:69px;border:1px solid #2b2b2b;background:#3d3d3d"></div>
<div class="a" style="left:5px;top:762px;width:366px;height:17px;background:#474747;border-bottom:1px solid #2b2b2b"></div>
<div class="a" style="left:5px;top:780px;width:366px;height:16px;background:#474747;border-bottom:1px solid #2b2b2b"></div>
<div class="t" style="left:7px;top:765px;color:#c8c8c8">0 xSignal Primitives (0 Highlighted)</div>
<div class="t" style="left:7px;top:781px;font-size:12.500px">网络</div><div class="t" style="left:83px;top:781px;font-size:12.500px">元素</div><div class="t" style="left:311px;top:781px;font-size:12.500px">延时 <span style="font-size:10px">(ps)</span></div>
<div class="sep" style="left:80px;top:783px;height:10px"></div><div class="sep" style="left:309px;top:783px;height:10px"></div>
<svg width="383" height="800" style="height:800px"><path d="M296,790H303L299.500,787Z" fill="#777"/></svg>
<div class="c" style="left:6px;top:812px"></div>
<div class="t" style="left:23px;top:813px;font-size:12.500px;color:#c4c4c4">仅显示节点</div>

<!-- red rect -->
<div class="a" style="left:6px;top:303px;width:388px;height:264px;box-sizing:border-box;border:2px solid #e2261c;border-radius:2px"></div>

<!-- watermark -->
<div class="t" style="left:1327px;top:787px;height:18px;line-height:18px;font-size:17.800px;color:rgba(190,190,190,.55)">@稀土掘金技术社区</div>
</div></body></html>
